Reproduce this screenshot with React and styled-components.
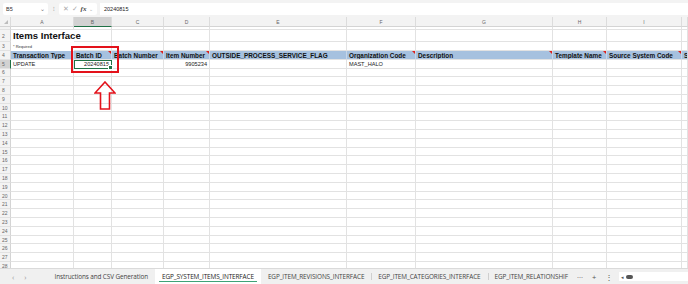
import React from "react";
import styled, { createGlobalStyle, css } from "styled-components";

const GlobalStyle = createGlobalStyle`
  html, body { margin: 0; padding: 0; background: #ffffff; }
  body { font-family: "Liberation Sans", Arial, sans-serif; overflow: hidden; }
`;

const COLS = "11px 63px 38px 52px 46px 137px 69px 137px 54px 75px 1fr";
const LETTERS = ["A", "B", "C", "D", "E", "F", "G", "H", "I", ""];

const HEADERS = [
  { text: "Transaction Type" },
  { text: "Batch ID", flag: true },
  { text: "Batch Number", flag: true },
  { text: "Item Number", flag: true },
  { text: "OUTSIDE_PROCESS_SERVICE_FLAG" },
  { text: "Organization Code", flag: true },
  { text: "Description", flag: true },
  { text: "Template Name", flag: true },
  { text: "Source System Code", flag: true },
  { text: "Sc" },
];

const TABS = [
  "Instructions and CSV Generation",
  "EGP_SYSTEM_ITEMS_INTERFACE",
  "EGP_ITEM_REVISIONS_INTERFACE",
  "EGP_ITEM_CATEGORIES_INTERFACE",
  "EGP_ITEM_RELATIONSHIF",
];

const Page = styled.div`
  position: relative;
  width: 688px;
  height: 284px;
  display: flex;
  flex-direction: column;
  background: #ffffff;
  overflow: hidden;
`;

const FormulaBar = styled.div`
  height: 17px;
  flex: none;
  display: flex;
  align-items: center;
  gap: 3px;
  padding: 0 0 0 3px;
  background: #f3f3f3;
  box-sizing: border-box;
`;

const NameBox = styled.div`
  width: 45px;
  height: 12px;
  background: #fff;
  border-radius: 2px;
  display: flex;
  align-items: center;
  justify-content: space-between;
  padding: 0 3px;
  box-sizing: border-box;
  font-size: 5.5px;
  color: #333;
`;

const Dots = styled.span`
  font-size: 6px;
  color: #777;
  width: 5px;
  text-align: center;
`;

const FxGroup = styled.div`
  height: 12px;
  width: 38px;
  background: #fff;
  border-radius: 2px;
  display: flex;
  align-items: center;
  justify-content: space-around;
  padding: 0 2px;
  box-sizing: border-box;
  color: #aaa;
  font-size: 7px;
`;

const Fx = styled.span`
  font-family: "Liberation Serif", serif;
  font-style: italic;
  font-weight: bold;
  color: #444;
  font-size: 7px;
`;

const FormulaInput = styled.div`
  flex: 1;
  height: 12px;
  background: #fff;
  display: flex;
  align-items: center;
  padding-left: 4px;
  font-size: 5.5px;
  color: #222;
`;

const Grid = styled.div`
  flex: 1;
  display: flex;
  flex-direction: column;
  overflow: hidden;
`;

const Row = styled.div`
  display: grid;
  grid-template-columns: ${COLS};
  height: ${(p) => p.h}px;
  flex: none;
`;

const ColHead = styled.div`
  background: ${(p) => (p.selected ? "#d2d2d2" : "#f3f3f3")};
  border-right: 1px solid #dcdcdc;
  border-bottom: 1px solid ${(p) => (p.selected ? "#1f7145" : "#d4d4d4")};
  color: #666;
  font-size: 5px;
  display: flex;
  align-items: center;
  justify-content: center;
  box-sizing: border-box;
  position: relative;
`;

const Corner = styled(ColHead)`
  &::after {
    content: "";
    position: absolute;
    right: 2px;
    bottom: 2px;
    border-left: 4px solid transparent;
    border-bottom: 4px solid #bdbdbd;
  }
`;

const RowNum = styled.div`
  background: ${(p) => (p.selected ? "#d2d2d2" : "#f3f3f3")};
  border-right: 1px solid ${(p) => (p.selected ? "#1f7145" : "#d4d4d4")};
  border-bottom: 1px solid #e2e2e2;
  color: #666;
  font-size: 5px;
  padding-left: 2px;
  display: flex;
  align-items: center;
  box-sizing: border-box;
  overflow: hidden;
`;

const Cell = styled.div`
  border-right: 1px solid ${(p) => (p.plain ? "transparent" : "#e2e2e2")};
  border-bottom: 1px solid ${(p) => (p.plain ? "transparent" : "#e2e2e2")};
  box-sizing: border-box;
  font-size: 5.6px;
  color: #222;
  display: flex;
  align-items: center;
  justify-content: ${(p) => (p.right ? "flex-end" : "flex-start")};
  padding: 0 2px;
  white-space: nowrap;
  overflow: visible;
  position: relative;
  min-width: 0;
  ${(p) =>
    p.active &&
    css`
      outline: 1.5px solid #1f7145;
      outline-offset: -1px;
      z-index: 2;
      &::after {
        content: "";
        position: absolute;
        right: -2px;
        bottom: -2px;
        width: 3px;
        height: 3px;
        background: #1f7145;
        border: 0.5px solid #fff;
      }
    `}
`;

const Title = styled.span`
  font-size: 9.6px;
  font-weight: bold;
  color: #111;
`;

const Note = styled.span`
  font-size: 4px;
  color: #333;
`;

const HeadCell = styled.div`
  background: #a6c1df;
  border-right: 1px solid #c7d6e8;
  border-bottom: 1px solid #e2e2e2;
  box-sizing: border-box;
  font-size: 6.4px;
  font-weight: bold;
  color: #111;
  display: flex;
  align-items: center;
  padding: 0 2px;
  white-space: nowrap;
  overflow: hidden;
  position: relative;
  &::after {
    content: "";
    display: ${(p) => (p.flag ? "block" : "none")};
    position: absolute;
    right: 0;
    top: 0;
    border-left: 3px solid transparent;
    border-top: 3px solid #e0201b;
  }
`;

const TabBar = styled.div`
  height: 16px;
  flex: none;
  background: #f0f0f0;
  border-top: 1px solid #dadada;
  display: flex;
  align-items: stretch;
  box-sizing: border-box;
  font-family: "Open Sans", "Noto Sans", sans-serif;
`;

const Nav = styled.div`
  display: flex;
  align-items: center;
  gap: 10px;
  padding: 0 21px 0 12px;
  color: #999;
  font-size: 7.5px;
`;

const Tab = styled.div`
  display: flex;
  align-items: center;
  padding: 0 7px;
  font-size: 6.4px;
  color: #444;
  white-space: nowrap;
  position: relative;
  letter-spacing: -0.1px;
  background: ${(p) => (p.active ? "#ffffff" : "transparent")};
  ${(p) =>
    p.active &&
    css`
      color: #222;
      &::after {
        content: "";
        position: absolute;
        left: 4px;
        right: 4px;
        bottom: 2px;
        height: 1.5px;
        background: #3fa277;
      }
    `}
  ${(p) =>
    p.sep &&
    css`
      &::before {
        content: "";
        position: absolute;
        left: 0;
        top: 4px;
        bottom: 4px;
        width: 1px;
        background: #cfcfcf;
      }
    `}
`;

const TabTools = styled.div`
  display: flex;
  align-items: center;
  gap: 9px;
  padding: 0 6px 0 2px;
  color: #555;
  font-size: 7.5px;
`;

const Scroll = styled.div`
  flex: 1;
  background: #ffffff;
  margin: 3px 0;
  display: flex;
  align-items: center;
  gap: 2px;
  padding-left: 2px;
  color: #555;
  font-size: 5px;
`;

const Thumb = styled.span`
  width: 7px;
  height: 4px;
  border-radius: 2px;
  background: #555;
`;

const Highlight = styled.div`
  position: absolute;
  left: 71px;
  top: 46px;
  width: 48px;
  height: 27px;
  border: 2px solid #e3121b;
  box-sizing: border-box;
  z-index: 5;
`;

const Arrow = styled.svg`
  position: absolute;
  left: 94px;
  top: 81px;
  z-index: 5;
`;

const emptyCells = (n) => Array.from({ length: n }, (_, i) => <Cell key={i} />);

export default function App() {
  const bodyRows = [];
  for (let r = 6; r <= 28; r++) {
    bodyRows.push(
      <Row key={r} h={8.8}>
        <RowNum>{r}</RowNum>
        {emptyCells(10)}
      </Row>
    );
  }

  return (
    <>
      <GlobalStyle />
      <Page>
        <FormulaBar>
          <NameBox>
            <span>B5</span>
            <span style={{ color: "#777" }}>⌄</span>
          </NameBox>
          <Dots>⁝</Dots>
          <FxGroup>
            <span>✕</span>
            <span>✓</span>
            <Fx>fx</Fx>
            <span style={{ fontSize: "5px" }}>⌄</span>
          </FxGroup>
          <FormulaInput>20240815</FormulaInput>
        </FormulaBar>
        <Grid>
          <Row h={10}>
            <Corner />
            {LETTERS.map((l, i) => (
              <ColHead key={i} selected={l === "B"}>
                {l}
              </ColHead>
            ))}
          </Row>
          <Row h={3}>
            <RowNum />
            {emptyCells(10)}
          </Row>
          <Row h={12}>
            <RowNum>2</RowNum>
            <Cell plain>
              <Title>Items Interface</Title>
            </Cell>
            {emptyCells(9)}
          </Row>
          <Row h={9}>
            <RowNum>3</RowNum>
            <Cell plain>
              <Note>* Required</Note>
            </Cell>
            {emptyCells(9)}
          </Row>
          <Row h={9}>
            <RowNum>4</RowNum>
            {HEADERS.map((h) => (
              <HeadCell key={h.text} flag={h.flag}>
                {h.text}
              </HeadCell>
            ))}
          </Row>
          <Row h={8.5}>
            <RowNum selected>5</RowNum>
            <Cell>UPDATE</Cell>
            <Cell right active>
              20240815
            </Cell>
            <Cell />
            <Cell right>9905234</Cell>
            <Cell />
            <Cell>MAST_HALO</Cell>
            {emptyCells(4)}
          </Row>
          {bodyRows}
        </Grid>
        <TabBar>
          <Nav>
            <span>‹</span>
            <span>›</span>
          </Nav>
          {TABS.map((t, i) => (
            <Tab key={t} active={i === 1} sep={i > 2}>
              {t}
            </Tab>
          ))}
          <TabTools>
            <span>···</span>
            <span>+</span>
            <span>⋮</span>
          </TabTools>
          <Scroll>
            <span>◂</span>
            <Thumb />
          </Scroll>
        </TabBar>
        <Highlight />
        <Arrow width="22" height="29" viewBox="0 0 22 29">
          <path
            d="M11 1 L21 12 L15.5 12 L15.5 28 L6.5 28 L6.5 12 L1 12 Z"
            fill="none"
            stroke="#e3121b"
            strokeWidth="1.6"
            strokeLinejoin="miter"
          />
        </Arrow>
      </Page>
    </>
  );
}
